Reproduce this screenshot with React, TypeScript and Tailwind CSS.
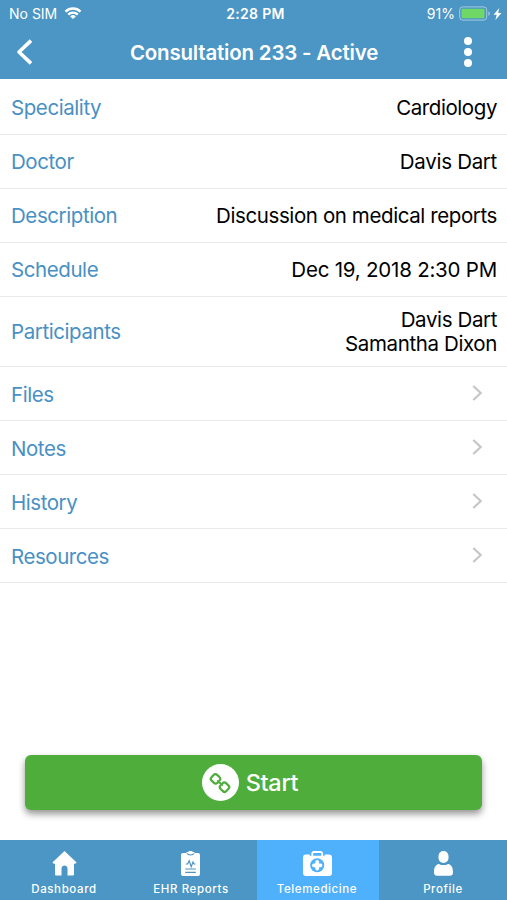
import type { ReactNode } from "react";
import clsx from "clsx";

interface Detail {
  label: string;
  values: string[];
  valueClass: string;
  height: string;
}

const DETAILS: Detail[] = [
  { label: "Speciality", values: ["Cardiology"], valueClass: "tracking-[-0.42px]", height: "h-14 pt-[2px]" },
  { label: "Doctor", values: ["Davis Dart"], valueClass: "tracking-[-0.3px]", height: "h-[54px]" },
  { label: "Description", values: ["Discussion on medical reports"], valueClass: "tracking-[-0.4px]", height: "h-[54px]" },
  { label: "Schedule", values: ["Dec 19, 2018 2:30 PM"], valueClass: "tracking-[-0.22px]", height: "h-[54px] pt-px" },
  { label: "Participants", values: ["Davis Dart", "Samantha Dixon"], valueClass: "tracking-[-0.38px]", height: "h-[70px]" },
];

const LINKS = ["Files", "Notes", "History", "Resources"];

function StatusBar() {
  return (
    <div className="grid h-[27px] grid-cols-3 items-center pl-[9px] pr-[5px] text-[14px]">
      <div className="flex items-center gap-[7px]">
        <span>No SIM</span>
        <svg className="mb-[2px] h-[12px] w-[18px]" viewBox="0 0 17 12" fill="none" stroke="currentColor" strokeWidth="2.4">
          <path d="M1 4.6a10.7 10.7 0 0 1 15 0M3.7 7.6a6.9 6.9 0 0 1 9.6 0" />
          <path d="M8.5 12 5.7 9.4a4 4 0 0 1 5.6 0Z" fill="currentColor" stroke="none" />
        </svg>
      </div>
      <span className="text-center font-semibold tracking-[0.3px]">2:28 PM</span>
      <div className="flex items-center justify-end">
        <span className="mr-[4px]">91%</span>
        <svg className="h-[15px] w-[34px]" viewBox="0 0 34 15" fill="none">
          <rect x=".7" y=".9" width="27" height="13.2" rx="3" stroke="#a6cbe2" />
          <rect x="2.5" y="2.7" width="23" height="9.6" rx="1.2" fill="#6fd866" />
          <path d="M29.3 5.2c2 .8 2 3.8 0 4.6Z" fill="#a6cbe2" />
        </svg>
        <svg className="h-[12px] w-[9px]" viewBox="0 0 9 12" fill="currentColor">
          <path d="M6.3 0 .5 6.7h3.2L2.4 12 8.5 4.9H5.1Z" />
        </svg>
      </div>
    </div>
  );
}

function TitleBar() {
  return (
    <div className="flex h-[50px] items-center justify-between pr-[35px] pl-4">
      <button aria-label="Back">
        <svg className="h-[26px] w-[17px]" viewBox="0 0 17 26" fill="none" stroke="currentColor" strokeWidth="3.6">
          <path d="M15 1.6 3 13 15 24.4" strokeLinejoin="round" />
        </svg>
      </button>
      <h1 className="ml-[11px] pt-[2px] text-[20.5px] font-semibold tracking-[-0.2px]">Consultation 233 - Active</h1>
      <button className="flex flex-col gap-[3px]" aria-label="More">
        <span className="size-[8px] rounded-full bg-white" />
        <span className="size-[8px] rounded-full bg-white" />
        <span className="size-[8px] rounded-full bg-white" />
      </button>
    </div>
  );
}

function ChainIcon() {
  return (
    <svg className="size-[22px]" viewBox="0 0 22 22" fill="none" stroke="#4fae3b" strokeWidth="2.2" strokeLinecap="round">
      <g transform="rotate(43 11 11)">
        <path d="M9 12.7c-.2 1.5-1.1 2.3-2.5 2.3H3.3C1.8 15 .8 14 .8 12.5v-3C.8 8 1.8 7 3.3 7h3.2C7.9 7 8.8 7.8 9 9.3" />
        <path d="M13 9.3c.2-1.5 1.1-2.3 2.5-2.3h3.2c1.5 0 2.5 1 2.5 2.5v3c0 1.5-1 2.5-2.5 2.5h-3.2c-1.4 0-2.3-.8-2.5-2.3" />
        <path d="M8 11h6" strokeWidth="2" />
      </g>
    </svg>
  );
}

interface TabProps {
  label: string;
  textClass?: string;
  active?: boolean;
  children: ReactNode;
}

function Tab({ label, textClass, active, children }: TabProps) {
  return (
    <button className={clsx("flex flex-col items-center pt-[11px]", active && "bg-[#4fb0fb]")}>
      <svg className="h-[25px] w-[31px]" viewBox="0 0 31 25" fill="currentColor">
        {children}
      </svg>
      <span className={clsx("mt-[5px] text-[11.5px] leading-4 font-medium tracking-[0.6px]", textClass)}>{label}</span>
    </button>
  );
}

export default function App() {
  return (
    <div className="flex h-[900px] w-[507px] flex-col overflow-hidden bg-white font-['Inter','Liberation_Sans',sans-serif] text-black">
      <header className="h-[79px] bg-[#4b96c4] text-white">
        <StatusBar />
        <TitleBar />
      </header>

      <main className="flex flex-1 flex-col">
        {DETAILS.map((row) => (
          <div
            key={row.label}
            className={clsx("flex items-center justify-between border-b border-[#e8ebec] pr-[10px] pl-[11px] text-[20.5px] leading-6", row.height)}
          >
            <span className="tracking-[-0.42px] text-[#4990c4]">{row.label}</span>
            <div className={clsx("text-right", row.valueClass)}>
              {row.values.map((value) => (
                <div key={value}>{value}</div>
              ))}
            </div>
          </div>
        ))}
        {LINKS.map((label) => (
          <div
            key={label}
            className="flex h-[54px] items-center justify-between border-b border-[#e8ebec] pr-6 pl-[11px] text-[20.5px] leading-6 tracking-[-0.45px]"
          >
            <span className="pt-[2px] text-[#4990c4]">{label}</span>
            <svg className="mb-px h-[16px] w-[11px]" viewBox="0 0 11 16" fill="none" stroke="#c6c6c9" strokeWidth="2.2">
              <path d="m1.3 1 7.4 7-7.4 7" />
            </svg>
          </div>
        ))}

        <button className="mx-[25px] mt-auto mb-[30px] flex h-[55px] items-center justify-center gap-[7px] rounded-[6px] bg-[#4fae3b] pr-[7px] text-white shadow-[0_4px_7px_rgba(0,0,0,0.42)]">
          <span className="flex size-[37px] items-center justify-center rounded-full bg-white">
            <ChainIcon />
          </span>
          <span className="pt-px text-[23.5px] font-medium tracking-[-0.3px]">Start</span>
        </button>
      </main>

      <nav className="grid h-[60px] grid-cols-[128px_129px_122px_128px] bg-[#4b96c4] text-white">
        <Tab label="Dashboard">
          <path d="M15.5 0 3.4 11.5l1.4 1.3H6V23c0 1.2.5 1.6 1.5 1.6h5V17.5c0-4 6-4 6 0v7.1h5c1 0 1.5-.4 1.5-1.6V12.8h1.200l1.400-1.300Z" />
        </Tab>
        <Tab label="EHR Reports" textClass="mr-[3px]">
          <g transform="translate(-2 0)">
            <rect x="6" y="2" width="19" height="23" rx="2" />
            <path d="M11 3c0-1.5.7-2 2-2 1-1.3 4-1.3 5 0 1.3 0 2 .5 2 2Z" />
            <path d="M12 2.600c1 1.800 6 1.800 7 0" fill="none" stroke="#4b96c4" strokeWidth="1.1" />
            <path d="M10.800 13h1.800l1.600-3.200 2 6 1.800-4.800 1 2h1.500M10.200 18h10.600M10.200 21.300h10.600" fill="none" stroke="#4b96c4" strokeWidth="1.200" />
          </g>
        </Tab>
        <Tab label="Telemedicine" textClass="mr-[2px]" active>
          <g transform="translate(-1.5 0)">
            <path d="M10.800 5V2.600C10.800 1.500 11.300 1 12.300 1h6.900c1 0 1.500.5 1.500 1.600V5" fill="none" stroke="currentColor" strokeWidth="1.800" />
            <path d="M4 3.500h4.200v1.300h15V3.500h4.300c1.900 0 3 1.100 3 3V22c0 1.900-1.100 3-3 3H4.500c-1.900 0-3-1.100-3-3V6.500c0-1.900 1.100-3 2.500-3Z" />
            <circle cx="15.700" cy="14.300" r="7" fill="#4fb0fb" />
            <path d="M15.700 11v6.600M12.400 14.300h6.600" fill="none" stroke="currentColor" strokeWidth="3.800" strokeLinecap="round" />
          </g>
        </Tab>
        <Tab label="Profile">
          <rect x="10.5" y="0" width="10" height="12" rx="5" />
          <path d="M6 21.5c0-5 1.300-8 5-8.600 2.300 1.600 6.700 1.600 9 0 3.700.6 5 3.600 5 8.600 0 2.300-1.200 3.200-3.200 3.200H9.200C7.200 24.700 6 23.800 6 21.500Z" />
        </Tab>
      </nav>
    </div>
  );
}
